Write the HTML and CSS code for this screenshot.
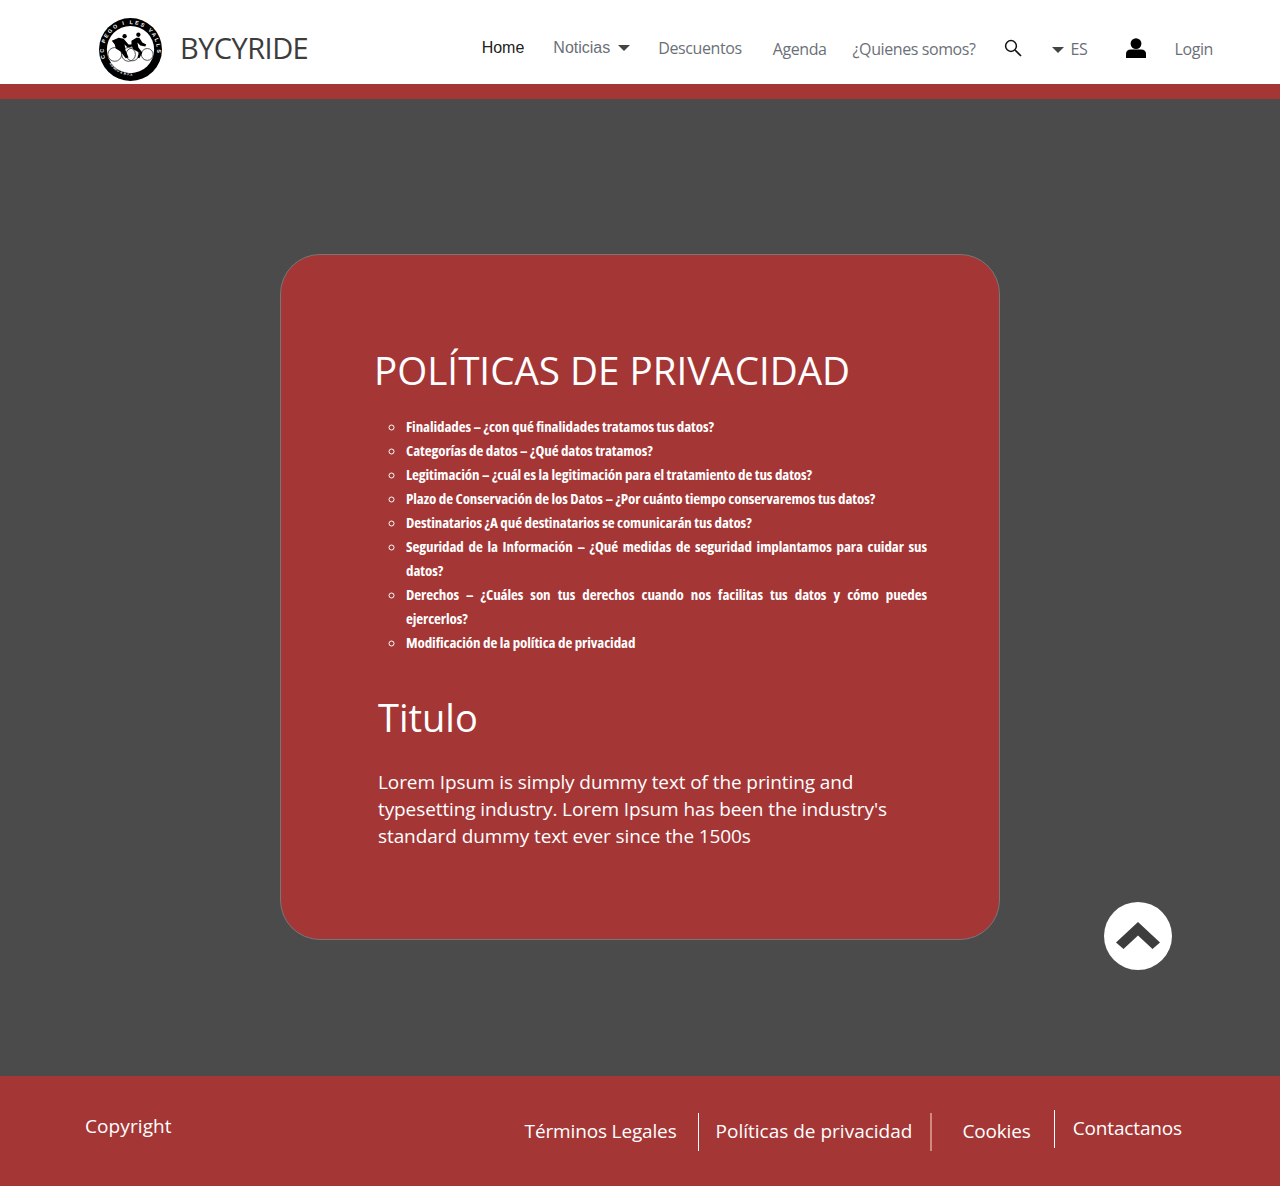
FILE: index.html
```html
<!DOCTYPE html>
<html lang="en">
<head>
    <meta charset="UTF-8">
    <meta name="viewport" content="width=device-width, initial-scale=1.0">
    <title>Bycyride</title>
    <link rel="stylesheet" href="styles.css">
</head>
<body>
    <header class="navbar">
        <a class="brand" href="#">
            <svg class="brand-logo" viewBox="0 0 64 64" width="63" height="63">
                <defs>
                    <path id="logoArc" d="M6.5 42 A27 27 0 1 1 57.5 42"/>
                    <path id="logoArcLow" d="M9 44 A27.5 27.5 0 0 0 47 55"/>
                </defs>
                <circle cx="32" cy="32" r="32" fill="#000"/>
                <circle cx="32" cy="32" r="24" fill="#fff"/>
                <text class="logo-text"><textPath href="#logoArc" startOffset="1">CC PEGO I LES VALLS</textPath></text>
                <text class="logo-small"><textPath href="#logoArcLow" startOffset="3">ROMEU &amp; R.F.A</textPath></text>
                <g fill="none" stroke="#444" stroke-width="0.9">
                    <circle cx="16" cy="37" r="7"/>
                    <circle cx="30" cy="37" r="7"/>
                    <circle cx="34" cy="37" r="6.5"/>
                    <circle cx="49" cy="37" r="6"/>
                </g>
                <path d="M13 23 L20 20 L25 21 L30 27 L34 27 L34 29 L29 30 L26 27 L27 33 L30 40 L27 41 L22 34 L17 31 L16 27 Z" fill="#000"/>
                <circle cx="26" cy="18.5" r="2.2" fill="#000"/>
                <path d="M33 23 L38 20 L41 20 L44 25 L48 27 L47 29 L42 28 L39 25 L40 30 L44 35 L41 41 L39 40 L41 35 L35 32 L33 28 Z" fill="#000"/>
                <circle cx="40" cy="17" r="2.2" fill="#000"/>
            </svg>
            <span class="brand-name">BYCYRIDE</span>
        </a>
        <nav class="nav-links">
            <a class="nav-link nav-home" href="#">Home</a>
            <a class="nav-link nav-noticias" href="#">Noticias<span class="caret"></span></a>
            <a class="nav-link nav-descuentos" href="#">Descuentos</a>
            <a class="nav-link nav-agenda" href="#">Agenda</a>
            <a class="nav-link nav-quienes" href="#">¿Quienes somos?</a>
            <svg class="nav-search" viewBox="0 0 18 18" width="18" height="18">
                <circle cx="7" cy="7" r="5.4" fill="none" stroke="#111" stroke-width="1.5"/>
                <path d="M11 11 L17 17" stroke="#111" stroke-width="1.7"/>
            </svg>
            <a class="nav-link nav-lang" href="#"><span class="caret"></span>ES</a>
            <svg class="nav-user" viewBox="0 0 20 20" width="20" height="20">
                <circle cx="10" cy="5.6" r="5.4" fill="#000"/>
                <path d="M0 20 V16 Q0 11.5 5 11.5 H15 Q20 11.5 20 16 V20 Z" fill="#000"/>
            </svg>
            <a class="nav-link nav-login" href="#">Login</a>
        </nav>
    </header>
    <div class="nav-stripe"></div>

    <main class="content">
        <section class="card">
            <h1>POLÍTICAS DE PRIVACIDAD</h1>
            <ul class="policy-list">
                <li>Finalidades – ¿con qué finalidades tratamos tus datos?</li>
                <li>Categorías de datos – ¿Qué datos tratamos?</li>
                <li>Legitimación – ¿cuál es la legitimación para el tratamiento de tus datos?</li>
                <li>Plazo de Conservación de los Datos – ¿Por cuánto tiempo conservaremos tus datos?</li>
                <li>Destinatarios ¿A qué destinatarios se comunicarán tus datos?</li>
                <li>Seguridad de la Información – ¿Qué medidas de seguridad implantamos para cuidar sus datos?</li>
                <li>Derechos – ¿Cuáles son tus derechos cuando nos facilitas tus datos y cómo puedes ejercerlos?</li>
                <li>Modificación de la política de privacidad</li>
            </ul>
            <h2>Titulo</h2>
            <p>Lorem Ipsum is simply dummy text of the printing and typesetting industry. Lorem Ipsum has been the industry's standard dummy text ever since the 1500s</p>
        </section>
        <a class="to-top" href="#">
            <svg viewBox="0 0 44 28" width="44" height="28">
                <path d="M0 20.5 L22 0 L44 20.5 L36.5 27 L22 13.5 L7.5 27 Z" fill="#3d3d3d"/>
            </svg>
        </a>
    </main>

    <footer class="footer">
        <span class="copyright">Copyright</span>
        <nav class="footer-links">
            <a class="footer-link terms" href="#">Términos Legales</a>
            <a class="footer-link privacy" href="#">Políticas de privacidad</a>
            <a class="footer-link cookies" href="#">Cookies</a>
            <a class="footer-link contact" href="#">Contactanos</a>
        </nav>
    </footer>
</body>
</html>
```
FILE: styles.css
```css
* {
    box-sizing: border-box;
}
body {
    margin: 0;
    font-family: 'Open Sans', 'Noto Sans', sans-serif;
    background-color: #4b4b4b;
    color: white;
}
a {
    text-decoration: none;
    color: inherit;
}
.navbar {
    height: 84px;
    background-color: white;
    display: flex;
    align-items: center;
    justify-content: space-between;
    padding: 14px 67px 0 99px;
}
.brand {
    display: flex;
    align-items: center;
    gap: 18px;
}
.brand-logo {
    display: block;
}
.logo-text {
    font-family: 'Liberation Sans', sans-serif;
    font-size: 5.4px;
    font-weight: bold;
    letter-spacing: 2px;
    fill: white;
}
.logo-small {
    font-family: 'Liberation Sans', sans-serif;
    font-size: 3px;
    font-weight: bold;
    letter-spacing: 0.4px;
    fill: white;
}
.brand-name {
    margin-bottom: 4px;
    font-size: 29px;
    color: #3c3c3c;
    letter-spacing: -0.55px;
}
.nav-links {
    display: flex;
    align-items: center;
}
.nav-link {
    font-size: 16px;
    letter-spacing: -0.4px;
    color: #6b7078;
    white-space: nowrap;
}
.nav-home {
    font-family: 'Liberation Sans', sans-serif;
    letter-spacing: 0;
    color: #222;
    margin-top: -2px;
}
.nav-noticias {
    font-family: 'Liberation Sans', sans-serif;
    letter-spacing: 0;
    margin-left: 29px;
    margin-top: -2px;
}
.caret {
    display: inline-block;
    width: 0;
    height: 0;
    margin-left: 8px;
    vertical-align: 2px;
    border-left: 6px solid transparent;
    border-right: 6px solid transparent;
    border-top: 6px solid #444;
}
.nav-descuentos {
    margin-left: 28px;
    margin-top: -3px;
}
.nav-agenda {
    margin-left: 31px;
}
.nav-quienes {
    margin-left: 26px;
}
.nav-search {
    margin-left: 28px;
    margin-top: -2px;
}
.nav-lang {
    margin-left: 30px;
}
.nav-lang .caret {
    margin-left: 0;
    margin-right: 7px;
}
.nav-user {
    margin-left: 39px;
    margin-top: -2px;
}
.nav-login {
    margin-left: 28px;
}
.nav-stripe {
    height: 15px;
    background-color: #a43636;
}
.content {
    position: relative;
    height: 977px;
    padding-top: 155px;
}
.card {
    width: 720px;
    height: 686px;
    margin: 0 auto;
    padding: 91px 72px 0 93px;
    background-color: #a43636;
    border: 1px solid #777;
    border-radius: 40px;
}
.card h1 {
    margin: 0;
    font-size: 38.6px;
    font-weight: 400;
    line-height: 48px;
    white-space: nowrap;
}
.policy-list {
    margin: 20px 0 0;
    padding-left: 32px;
    list-style-type: circle;
    font-family: 'Open Sans', sans-serif;
    font-stretch: 75%;
    font-size: 15px;
    letter-spacing: -0.1px;
    font-weight: 700;
    line-height: 24px;
    text-align: justify;
}
.card h2 {
    margin: 38px 0 0 4px;
    font-size: 38px;
    font-weight: 400;
    line-height: 50px;
}
.card p {
    margin: 27px 0 0 4px;
    font-size: 19px;
    letter-spacing: -0.1px;
    line-height: 27px;
}
.to-top {
    position: absolute;
    left: 1104px;
    top: 803px;
    width: 68px;
    height: 68px;
    display: flex;
    align-items: center;
    justify-content: center;
    background-color: white;
    border-radius: 50%;
}
.footer {
    height: 110px;
    background-color: #a43636;
    display: flex;
    justify-content: space-between;
    padding: 0 98px 0 85px;
}
.copyright {
    margin-top: 36px;
    font-size: 19px;
    letter-spacing: 0.1px;
    line-height: 28px;
}
.footer-links {
    display: flex;
    align-items: flex-start;
}
.footer-link {
    font-size: 19px;
    letter-spacing: -0.15px;
    line-height: 36px;
    height: 38px;
    margin-top: 37px;
}
.terms {
    padding-right: 21px;
    border-right: 1px solid white;
}
.privacy {
    padding: 0 18px 0 17px;
    letter-spacing: 0;
    border-right: 2px solid #d08a80;
}
.cookies {
    padding: 0 23px 0 30px;
}
.contact {
    padding-left: 18px;
    margin-top: 34px;
    border-left: 1px solid white;
}
```
